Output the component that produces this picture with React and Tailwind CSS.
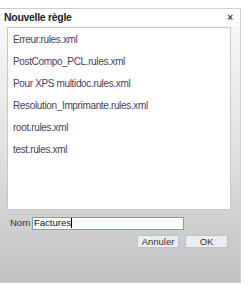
export default function App() {
  const items = [
    "Erreur.rules.xml",
    "PostCompo_PCL.rules.xml",
    "Pour XPS multidoc.rules.xml",
    "Resolution_Imprimante.rules.xml",
    "root.rules.xml",
    "test.rules.xml",
  ];
  return (
    <div className="w-[251px] h-[292px] bg-white pt-[8px]" style={{ fontFamily: "'Liberation Sans', Arial, sans-serif" }}>
      <div className="w-[241px] h-[275px] border-t border-r border-b border-[#cfcfcf] bg-gradient-to-b from-[#fafafa] via-[#e2e2e2] to-[#c2c2c4] flex flex-col">
        <div className="h-[17px] flex items-center justify-between pl-[4px] pr-[7px] bg-white">
          <span className="text-[10.5px] font-bold text-[#222] tracking-[-0.3px]">Nouvelle règle</span>
          <span className="text-[10px] font-bold text-[#444] leading-none">×</span>
        </div>
        <div className="ml-[7px] mt-[1px] w-[224px] h-[183px] bg-white border border-[#c8c8c8] pl-[5px]">
          {items.map((t) => (
            <div key={t} className="h-[22px] flex items-center text-[10px] text-[#4b3d5c] tracking-[-0.35px]">{t}</div>
          ))}
        </div>
        <div className="flex items-center mt-[6px] pl-[10px]">
          <span className="text-[9.5px] text-[#333] w-[22px]">Nom</span>
          <div className="w-[152px] h-[13px] bg-white border border-[#7a9cd3] flex items-center pl-[1px] text-[9.5px] text-[#111]">
            Factures<span className="w-px h-[10px] bg-black"></span>
          </div>
        </div>
        <div className="flex justify-end gap-[6px] mt-[5px] pr-[12px]">
          <button className="w-[42px] h-[13px] bg-[#ececee] border border-[#b9c3d4] text-[9.5px] text-[#333] leading-none">Annuler</button>
          <button className="w-[43px] h-[13px] bg-[#ececee] border border-[#b9c3d4] text-[9.5px] text-[#333] leading-none">OK</button>
        </div>
      </div>
    </div>
  );
}
